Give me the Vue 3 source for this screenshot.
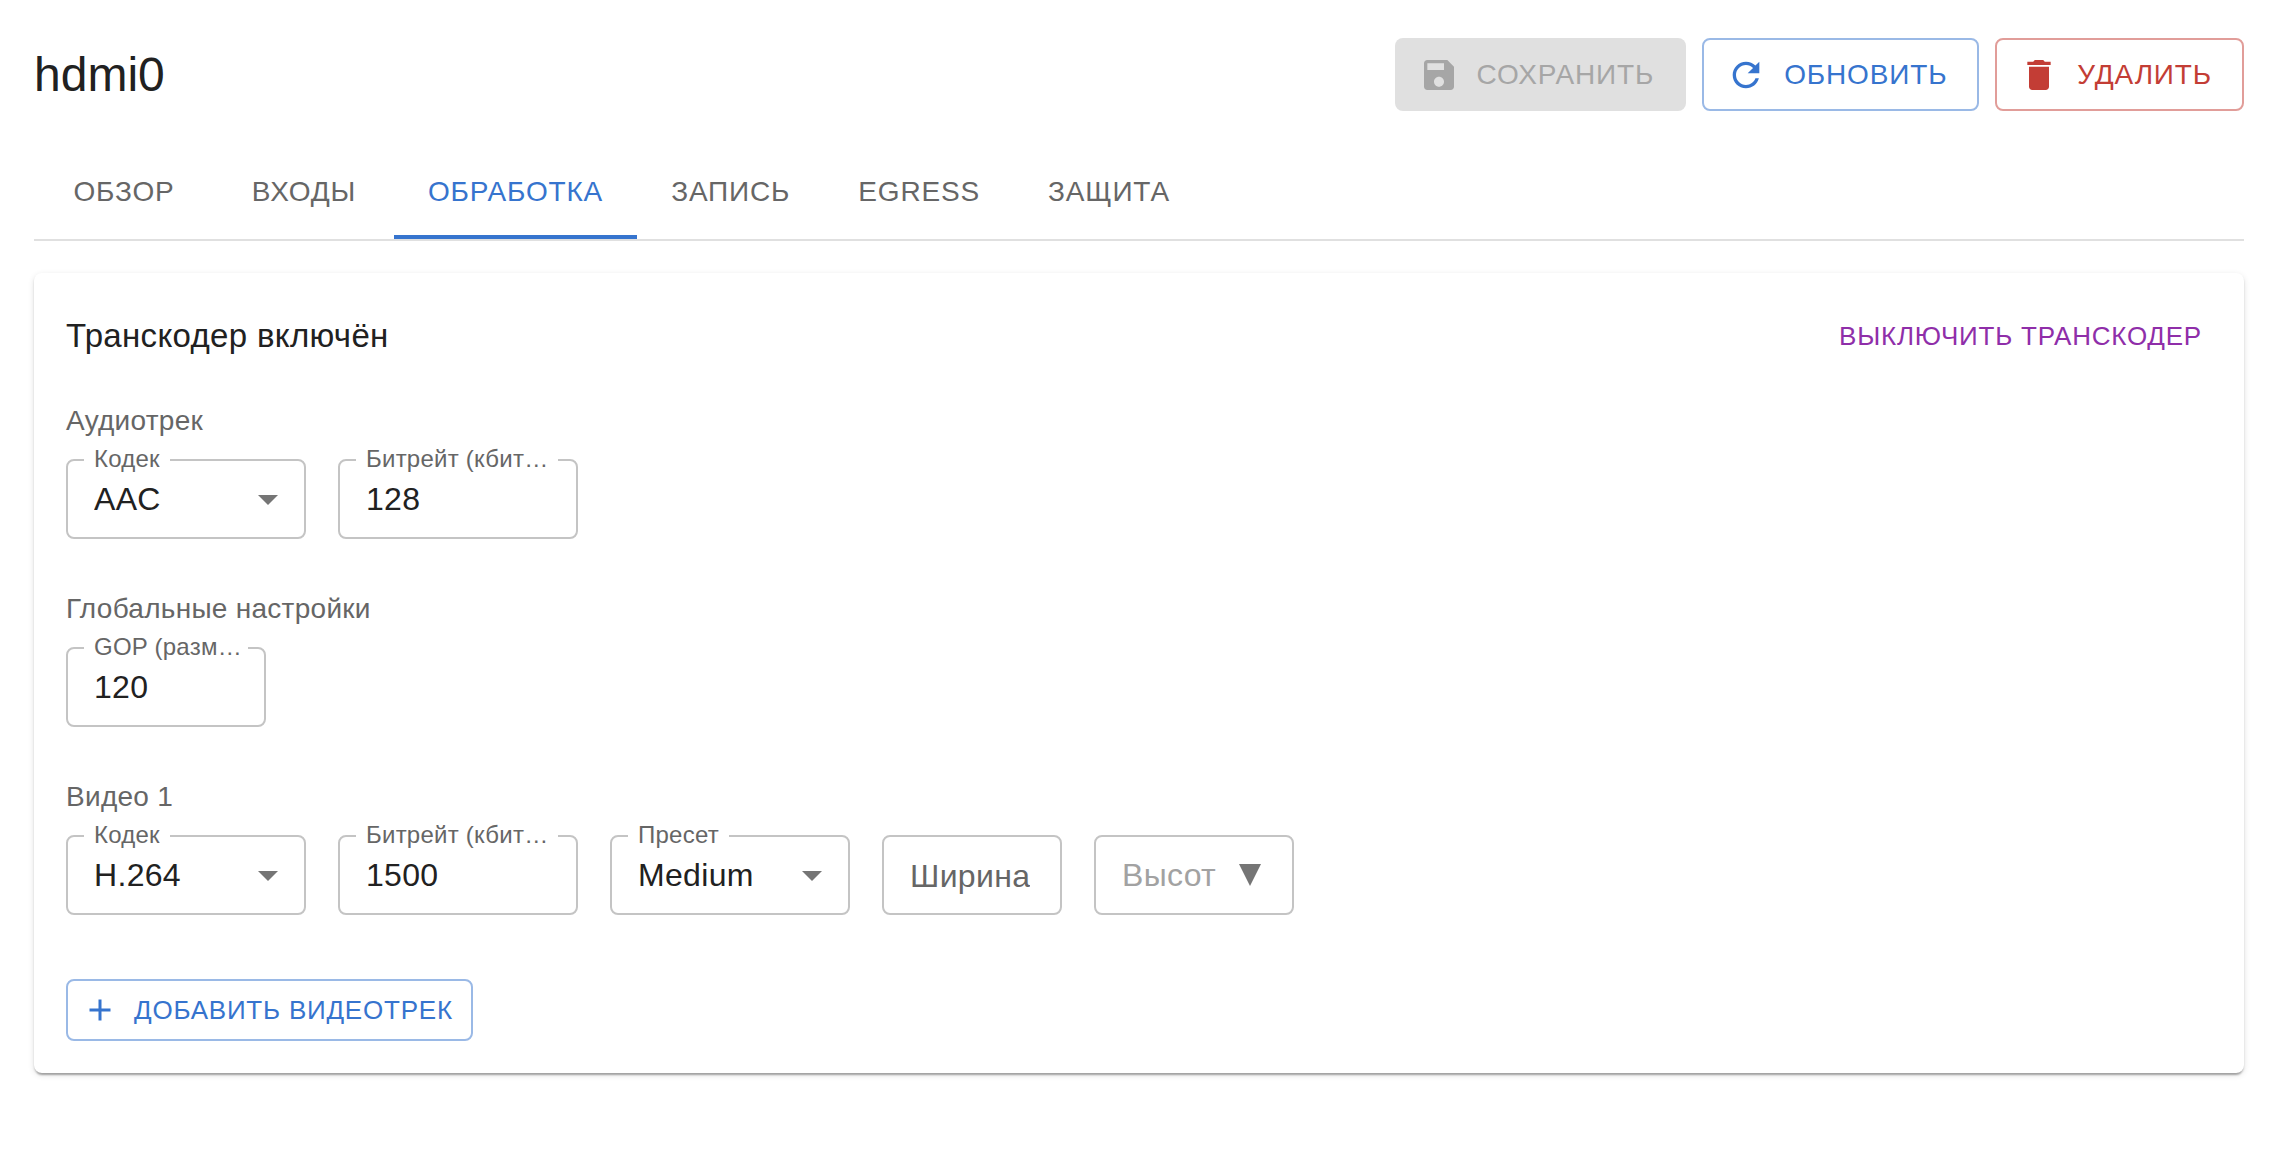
<template>
    <main class="page">
        <header class="header">
            <h1 class="title">hdmi0</h1>
            <div class="actions">
                <button type="button" class="btn btn-contained" disabled>
                    <svg class="icon" viewBox="0 0 24 24">
                        <path d="M17 3H5c-1.110 0-2 .9-2 2v14c0 1.100.890 2 2 2h14c1.100 0 2-.9 2-2V7l-4-4zm-5 16c-1.660 0-3-1.340-3-3s1.340-3 3-3 3 1.340 3 3-1.340 3-3 3zm3-10H5V5h10v4z" />
                    </svg>
                    Сохранить
                </button>
                <button type="button" class="btn btn-outlined">
                    <svg class="icon" viewBox="0 0 24 24">
                        <path d="M17.650 6.350C16.200 4.900 14.210 4 12 4c-4.420 0-7.990 3.580-7.990 8s3.570 8 7.990 8c3.730 0 6.840-2.550 7.730-6h-2.080c-.820 2.330-3.040 4-5.650 4-3.310 0-6-2.690-6-6s2.690-6 6-6c1.660 0 3.140.690 4.220 1.780L13 11h7V4l-2.350 2.350z" />
                    </svg>
                    Обновить
                </button>
                <button type="button" class="btn btn-outlined btn-danger">
                    <svg class="icon" viewBox="0 0 24 24">
                        <path d="M6 19c0 1.100.9 2 2 2h8c1.100 0 2-.9 2-2V7H6v12zM19 4h-3.500l-1-1h-5l-1 1H5v2h14V4z" />
                    </svg>
                    Удалить
                </button>
            </div>
        </header>

        <nav class="tabs" role="tablist">
            <button
                v-for="tab in tabs"
                :key="tab"
                type="button"
                role="tab"
                class="tab"
                :class="{ active: tab === activeTab }"
                :aria-selected="tab === activeTab"
                @click="activeTab = tab"
            >
                {{ tab }}
            </button>
        </nav>

        <section class="card">
            <div class="card-head">
                <h2 class="card-title">Транскодер включён</h2>
                <button type="button" class="btn btn-small btn-text">Выключить транскодер</button>
            </div>

            <div v-for="group in groups" :key="group.title" class="group">
                <h3 class="group-title">{{ group.title }}</h3>
                <div class="fields">
                    <div
                        v-for="field in group.fields"
                        :key="field.id"
                        class="field"
                        :class="[field.size, { empty: field.empty }]"
                    >
                        <label v-if="field.label" :for="field.id" class="label">
                            <span>{{ field.label }}</span>
                        </label>
                        <template v-if="field.options">
                            <select :id="field.id" v-model="field.value" class="control">
                                <option v-for="option in field.options" :key="option">{{ option }}</option>
                            </select>
                            <svg class="arrow" viewBox="0 0 24 24"><path d="M7 10l5 5 5-5z" /></svg>
                        </template>
                        <input
                            v-else
                            :id="field.id"
                            v-model="field.value"
                            type="text"
                            class="control"
                            :placeholder="field.placeholder"
                            :aria-label="field.placeholder"
                        >
                        <svg v-if="field.list" class="list-arrow" viewBox="0 0 22 22"><path d="M0 0h22L11 22z" /></svg>
                    </div>
                </div>
            </div>

            <button type="button" class="btn btn-small btn-outlined btn-add">
                <svg class="icon" viewBox="0 0 24 24"><path d="M19 13h-6v6h-2v-6H5v-2h6V5h2v6h6v2z" /></svg>
                Добавить видеотрек
            </button>
        </section>
    </main>
</template>

<script setup>
import { ref } from 'vue'

const tabs = ['Обзор', 'Входы', 'Обработка', 'Запись', 'Egress', 'Защита']
const activeTab = ref('Обработка')

const groups = ref([
    {
        title: 'Аудиотрек',
        fields: [
            { id: 'audio-codec', label: 'Кодек', value: 'AAC', options: ['AAC'] },
            { id: 'audio-bitrate', label: 'Битрейт (кбит…', value: '128' },
        ],
    },
    {
        title: 'Глобальные настройки',
        fields: [
            { id: 'gop', label: 'GOP (разм…', value: '120', size: 'medium' },
        ],
    },
    {
        title: 'Видео 1',
        fields: [
            { id: 'video-codec', label: 'Кодек', value: 'H.264', options: ['H.264'] },
            { id: 'video-bitrate', label: 'Битрейт (кбит…', value: '1500' },
            { id: 'video-preset', label: 'Пресет', value: 'Medium', options: ['Medium'] },
            { id: 'video-width', label: 'Ширина', value: '', size: 'small', empty: true },
            { id: 'video-height', placeholder: 'Высот', value: '', size: 'medium', list: true },
        ],
    },
])
</script>

<style>
body {
    background: #fff;
}
</style>

<style scoped>
.page {
    padding: 38px 26px 32px 34px;
    font-family: "Liberation Sans", Helvetica, Arial, sans-serif;
    color: #212121;
}

.page * {
    box-sizing: border-box;
}

.header {
    display: flex;
    align-items: center;
    justify-content: space-between;
}

.title {
    margin: 0;
    font-size: 48px;
    line-height: 64px;
    font-weight: 400;
}

.actions {
    display: flex;
    gap: 16px;
}

.btn {
    display: inline-flex;
    align-items: center;
    padding: 12px 32px;
    border: 0;
    border-radius: 8px;
    background: transparent;
    color: #3674ce;
    font-family: inherit;
    font-size: 28px;
    line-height: 49px;
    letter-spacing: 0.03em;
    text-transform: uppercase;
    cursor: pointer;
}

.btn-contained {
    background: #e0e0e0;
    color: #a6a6a6;
    cursor: default;
}

.btn-outlined {
    padding: 10px 30px;
    border: 2px solid #9ab9e6;
}

.btn-danger {
    border-color: #e19d99;
    color: #c33d35;
}

.btn-small {
    padding: 8px 10px;
    font-size: 26px;
    line-height: 46px;
}

.btn-text {
    color: #8f2ea9;
}

.btn-add {
    padding: 6px 18px;
}

.icon {
    width: 40px;
    height: 40px;
    margin-left: -8px;
    margin-right: 18px;
    fill: currentColor;
}

.btn-small .icon {
    width: 36px;
    height: 36px;
    margin-left: -4px;
    margin-right: 16px;
}

.tabs {
    display: flex;
    margin-top: 32px;
    border-bottom: 2px solid #e0e0e0;
}

.tab {
    min-width: 180px;
    height: 96px;
    padding: 6px 34px 0;
    border: 0;
    border-bottom: 4px solid transparent;
    background: transparent;
    color: #666;
    font-family: inherit;
    font-size: 28px;
    letter-spacing: 0.03em;
    text-transform: uppercase;
    cursor: pointer;
}

.tab.active {
    border-bottom-color: #3674ce;
    color: #3674ce;
}

.card {
    margin-top: 32px;
    padding: 32px;
    border-radius: 8px;
    box-shadow: 0 4px 2px -2px rgba(0, 0, 0, 0.2),
        0 2px 2px 0 rgba(0, 0, 0, 0.14),
        0 2px 6px 0 rgba(0, 0, 0, 0.12);
}

.card-head {
    display: flex;
    align-items: center;
    justify-content: space-between;
    margin-bottom: 34px;
}

.card-title {
    margin: 0;
    font-size: 33px;
    line-height: 48px;
    font-weight: 400;
    letter-spacing: 0.01em;
}

.group {
    margin-bottom: 50px;
}

.group:last-of-type {
    margin-bottom: 64px;
}

.group-title {
    margin: 0 0 18px;
    color: #666;
    font-size: 28px;
    line-height: 40px;
    font-weight: 400;
    letter-spacing: 0.01em;
}

.fields {
    display: flex;
    flex-wrap: wrap;
    gap: 32px;
}

.field {
    position: relative;
    display: flex;
    align-items: center;
    width: 240px;
    height: 80px;
    border: 2px solid #c4c4c4;
    border-radius: 8px;
}

.field.medium {
    width: 200px;
}

.field.small {
    width: 180px;
}

.label {
    position: absolute;
    top: -16px;
    left: 16px;
    display: flex;
    max-width: calc(100% - 32px);
    padding: 0 2px 0 10px;
    background: #fff;
    color: #666;
    font-size: 24px;
    line-height: 28px;
    letter-spacing: 0.01em;
}

.label span {
    overflow: hidden;
    text-overflow: ellipsis;
    white-space: nowrap;
}

/* right side of the notch, gives way first when the label is long */
.label::after {
    content: "";
    flex: 0 9999 auto;
    width: 8px;
}

.empty .label {
    top: 20px;
    max-width: none;
    font-size: 32px;
    line-height: 38px;
}

.control {
    flex: 1;
    min-width: 0;
    height: 76px;
    padding: 0 26px;
    border: 0;
    outline: 0;
    appearance: none;
    background: transparent;
    color: #212121;
    font-family: inherit;
    font-size: 32px;
    letter-spacing: 0.01em;
    text-overflow: clip;
}

.control::placeholder {
    color: #a2a2a2;
    opacity: 1;
}

.arrow {
    position: absolute;
    right: 12px;
    width: 48px;
    height: 48px;
    fill: #757575;
    pointer-events: none;
}

.list-arrow {
    flex: none;
    width: 22px;
    height: 22px;
    margin-right: 31px;
    fill: #757575;
}

.field:has(.list-arrow) .control {
    padding-right: 0;
}
</style>
